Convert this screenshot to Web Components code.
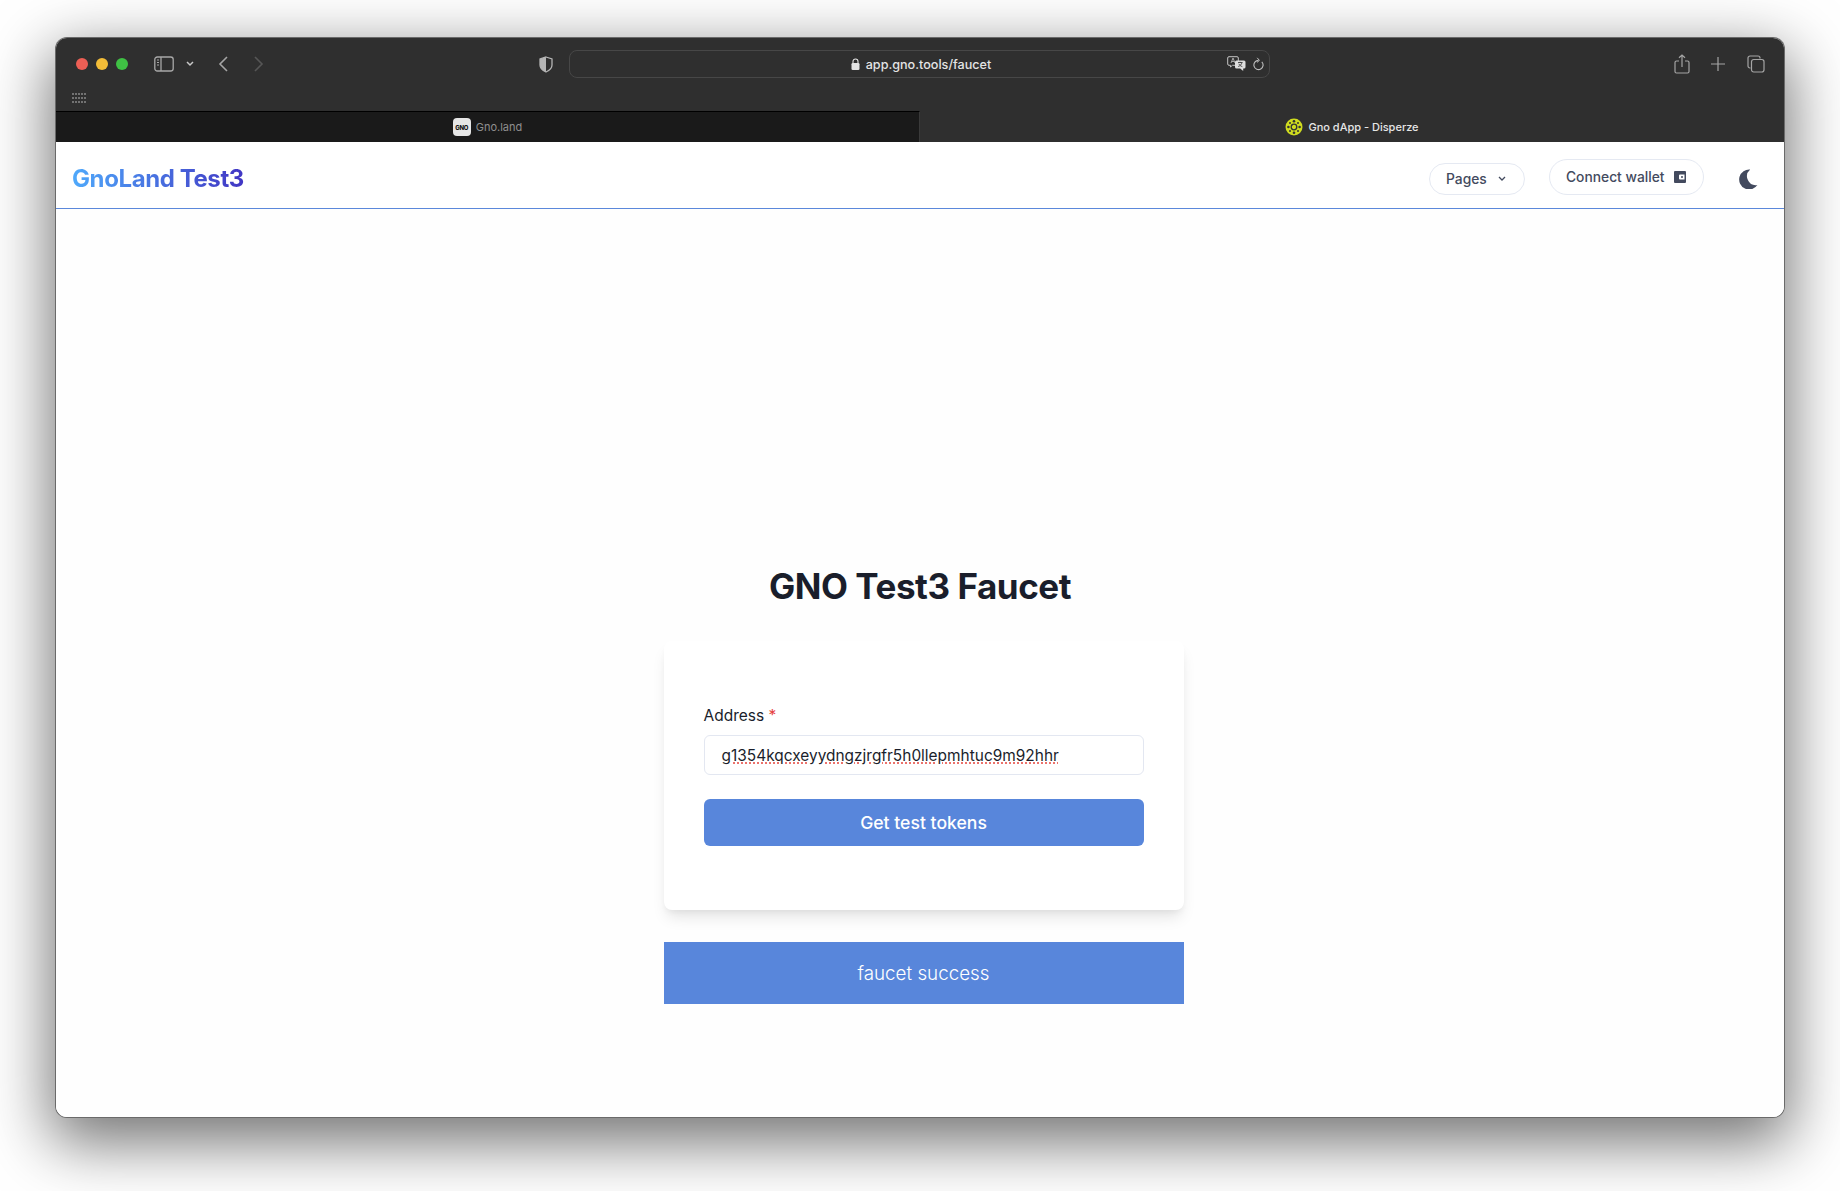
<!DOCTYPE html>
<html>
<head>
<meta charset="utf-8">
<title>GNO Test3 Faucet</title>
<style>
  html, body { margin: 0; height: 100%; background: #fff; }
  body { font-family: Inter, "Liberation Sans", sans-serif; overflow: hidden; }
</style>
</head>
<body>
<browser-window url="app.gno.tools/faucet">
  <site-nav></site-nav>
  <faucet-page>
    <faucet-form></faucet-form>
    <faucet-banner>faucet success</faucet-banner>
  </faucet-page>
</browser-window>

<script>
class BrowserWindow extends HTMLElement{
constructor(){
    super();
    this.attachShadow({mode: 'open'});
    this.shadowRoot.innerHTML=`
    <style>
        :host{
            display: flex;
            flex-direction: column;
            width: 1728px;
            height: 1079px;
            margin: 38px 0 0 56px;
            border-radius: 11px;
            background: #fefefe;
            box-shadow: 0 0 0 1px #6a6a6a, 0 20px 62px 6px rgba(0,0,0,.55);
        }
        #frame{ flex: 1; display: flex; flex-direction: column; border-radius: 11px; overflow: hidden; }
        #toolbar{ background: #2f2f2f; color: #b5b5b5; height: 73px; flex: none; }
        #row{ display: flex; align-items: center; height: 28px; padding: 12px 0 0 20px; }
        .light{ width: 12px; height: 12px; border-radius: 50%; margin-right: 8px; }
        svg{ display: block; flex: none; }
        #address{
            width: 696px;
            height: 26px;
            margin-left: 16px;
            padding-left: 3px;
            border: 1px solid #474747;
            border-radius: 8px;
            display: flex;
            align-items: center;
            justify-content: center;
            position: relative;
            font-size: 12.6px;
            font-weight: 500;
            color: #e4e4e4;
        }
        #address .lock{ margin-right: 6px; }
        #page-tools{ position: absolute; right: 5px; top: 5px; display: flex; align-items: center; gap: 7px; }
        #favs{ padding: 15px 0 0 16px; }
        #tabs{ display: grid; grid-template-columns: 1fr 1fr; height: 31px; flex: none; font-size: 11px; }
        .tab{ display: flex; align-items: center; justify-content: center; gap: 5px; border-top: 1px solid #000; box-sizing: border-box; }
        .tab.off{ background: #1a1a1a; color: #8f8f8f; border-right: 1px solid #3a3a3a; }
        .tab.on{ background: #2f2f2f; color: #e6e6e6; border-top-color: #2f2f2f; font-weight: 500; }
        #fav-gno{
            width: 18px; height: 18px; border-radius: 4px; background: #e6e6e6; color: #111;
            font-size: 6px; font-weight: 800; letter-spacing: -.2px;
            display: flex; align-items: center; justify-content: center;
        }
        #content{ flex: 1; display: flex; flex-direction: column; background: #fefefe; min-height: 0; }
    </style>
    <div id="frame">
      <div id="toolbar">
        <div id="row">
          <span class="light" style="background:#ed5f55"></span>
          <span class="light" style="background:#f3bd38"></span>
          <span class="light" style="background:#3fc144;margin-right:26px"></span>
          <svg width="20" height="16" viewBox="0 0 20 16" fill="none" stroke="#a8a8a8" stroke-width="1.3"><rect x=".8" y="1" width="18.4" height="14" rx="2.5"/><path d="M7 1v14"/><path d="M3 4h2M3 6.5h2M3 9h2" stroke-width="1.1"/></svg>
          <svg style="margin-left:12px" width="8" height="6" viewBox="0 0 8 6" fill="none" stroke="#c8c8c8" stroke-width="1.5"><path d="M1 1l3 3 3-3"/></svg>
          <svg style="margin-left:24px" width="10" height="16" viewBox="0 0 10 16" fill="none" stroke="#a5a5a5" stroke-width="1.6"><path d="M9 1L2 8l7 7"/></svg>
          <svg style="margin-left:26px" width="10" height="16" viewBox="0 0 10 16" fill="none" stroke="#565656" stroke-width="1.6"><path d="M1 1l7 7-7 7"/></svg>
          <svg style="margin-left:275px" width="14" height="17" viewBox="0 0 14 17"><path d="M7 1l6 2v6c0 3.500-3 5.700-6 7-3-1.300-6-3.500-6-7V3z" fill="none" stroke="#b5b5b5" stroke-width="1.300"/><path d="M7 1L1 3v6c0 3.500 3 5.700 6 7z" fill="#b5b5b5"/></svg>
          <div id="address">
            <svg class="lock" width="9" height="12" viewBox="0 0 9 12"><path d="M2 5.500V3.500a2.500 2.500 0 015 0v2" fill="none" stroke="#e4e4e4" stroke-width="1.100"/><rect x=".5" y="5" width="8" height="7" rx="1.300" fill="#e4e4e4"/></svg>
            <span>${this.getAttribute('url')}</span>
            <div id="page-tools">
              <svg width="19" height="15" viewBox="0 0 19 15"><path d="M2 .7h8a1.300 1.300 0 011.300 1.300v6a1.300 1.300 0 01-1.300 1.300H5.500L3.500 11V9.300H2A1.300 1.300 0 01.7 8V2A1.300 1.300 0 012 .7z" fill="#2f2f2f" stroke="#c4c4c4" stroke-width="1"/><path d="M4 7l2-5 2 5M4.800 5.500h2.400" fill="none" stroke="#c4c4c4" stroke-width=".8"/><path d="M9.500 4.500h7.500a1.500 1.500 0 011.500 1.500v5a1.500 1.500 0 01-1.500 1.500h-.8V15l-3-2.500H9.500A1.500 1.500 0 018 11V6a1.500 1.500 0 011.500-1.500z" fill="#dedede"/><path d="M11 6.500h4.500M13.200 5.800v1M15 6.500c-.5 2-2 3.500-3.800 4M11.800 7.800c.6 1.300 2 2.400 3.500 2.800" fill="none" stroke="#2f2f2f" stroke-width=".8"/></svg>
              <svg width="11" height="14" viewBox="0 0 11 14" fill="none" stroke="#bcbcbc" stroke-width="1.100"><path d="M8.800 4.800A4.600 4.600 0 1 1 5.500 3.400"/><path d="M4.200 .8l2.200 2.600-2.400 2" stroke-width="1"/></svg>
            </div>
          </div>
          <svg style="margin-left:404px" width="16" height="20" viewBox="0 0 16 20" fill="none" stroke="#a5a5a5" stroke-width="1.200"><path d="M5 7H2.500A1.500 1.500 0 001 8.500v9A1.500 1.500 0 002.500 19h11a1.500 1.500 0 001.500-1.500v-9A1.500 1.500 0 0013.500 7H11"/><path d="M8 13V1M5 3.800L8 1l3 2.800"/></svg>
          <svg style="margin-left:21px" width="14" height="14" viewBox="0 0 14 14" stroke="#a5a5a5" stroke-width="1.200"><path d="M7 0v14M0 7h14"/></svg>
          <svg style="margin-left:22px" width="18" height="18" viewBox="0 0 18 18" fill="none" stroke="#a5a5a5" stroke-width="1.200"><path d="M3.500 13H3a2 2 0 01-2-2V3a2 2 0 012-2h8a2 2 0 012 2v.5"/><rect x="4.500" y="4.500" width="12.500" height="12.500" rx="2.200"/></svg>
        </div>
        <div id="favs">
          <svg width="14" height="11" viewBox="0 0 14 11" fill="#8a8a8a"><g id="d"><rect x="0" y="0" width="2" height="2" rx="1"/><rect x="3" y="0" width="2" height="2" rx="1"/><rect x="6" y="0" width="2" height="2" rx="1"/><rect x="9" y="0" width="2" height="2" rx="1"/><rect x="12" y="0" width="2" height="2" rx="1"/></g><use href="#d" y="4"/><use href="#d" y="8"/></svg>
        </div>
      </div>
      <div id="tabs">
        <div class="tab off"><span id="fav-gno">GNO</span><span>Gno.land</span></div>
        <div class="tab on">
          <svg width="18" height="18" viewBox="0 0 18 18"><circle cx="9" cy="9" r="8.500" fill="#cfdc1f"/><circle cx="9" cy="9" r="2.800" fill="none" stroke="#333" stroke-width="1.300"/><g fill="#333"><circle cx="9" cy="3.300" r="1.300"/><circle cx="9" cy="14.700" r="1.300"/><circle cx="3.400" cy="9" r="1.300"/><circle cx="14.600" cy="9" r="1.300"/><circle cx="5" cy="5" r="1"/><circle cx="13" cy="5" r="1"/><circle cx="5" cy="13" r="1"/><circle cx="13" cy="13" r="1"/></g></svg>
          <span>Gno dApp - Disperze</span>
        </div>
      </div>
      <div id="content"><slot></slot></div>
    </div>`;
}
}

class SiteNav extends HTMLElement{
constructor(){
    super();
    this.attachShadow({mode: 'open'});
    this.shadowRoot.innerHTML=`
    <style>
        :host{
            display: flex;
            align-items: center;
            flex: none;
            height: 67px;
            box-sizing: border-box;
            padding: 7px 26px 0 16px;
            border-bottom: 1px solid #5b88db;
            background: #fff;
            color: #434a5e;
        }
        #logo{
            font-size: 24px;
            font-weight: 700;
            letter-spacing: -.4px;
            background: linear-gradient(90deg, #4fa9fb, #4136c4);
            -webkit-background-clip: text;
            background-clip: text;
            color: transparent;
            margin-right: auto;
        }
        .pill{
            display: flex;
            align-items: center;
            box-sizing: border-box;
            border: 1px solid #e5e9f2;
            border-radius: 20px;
            font-size: 13.8px;
            font-weight: 500;
            background: #fff;
        }
        #pages{ height: 32px; width: 96px; padding-left: 16px; }
        #pages svg{ margin-left: 11px; }
        #wallet{ height: 36px; width: 155px; padding-left: 16px; margin: 0 0 4px 24px; }
        #wallet svg{ margin-left: 9px; }
        #moon{ margin-left: 34px; }
    </style>
    <div id="logo">GnoLand Test3</div>
    <div class="pill" id="pages">Pages
      <svg width="8" height="6" viewBox="0 0 8 6" fill="none" stroke="#434a5e" stroke-width="1.300"><path d="M1 1l3 3 3-3"/></svg>
    </div>
    <div class="pill" id="wallet">Connect wallet
      <svg width="12" height="12" viewBox="0 0 12 12"><path fill-rule="evenodd" d="M1 0h10a1 1 0 011 1v10a1 1 0 01-1 1H1a1 1 0 01-1-1V1a1 1 0 011-1zm5 3.500a1 1 0 00-1 1v3a1 1 0 001 1h4.500v-5zM8 5a1 1 0 110 2 1 1 0 010-2z" fill="#434a5e"/></svg>
    </div>
    <svg id="moon" width="20" height="20" viewBox="0 0 18 18"><path d="M11 .5A9 9 0 1017.500 14.500 8 8 0 0111 .5z" fill="#434a5e"/></svg>`;
}
}

class FaucetPage extends HTMLElement{
constructor(){
    super();
    this.attachShadow({mode: 'open'});
    this.shadowRoot.innerHTML=`
    <style>
        :host{
            display: flex;
            flex-direction: column;
            align-items: center;
            flex: 1;
            padding-top: 357px;
            color: #1a1e2b;
        }
        h1{
            margin: 0 0 35px;
            font-size: 35px;
            line-height: 40px;
            font-weight: 700;
            letter-spacing: -.45px;
        }
        #stack{ width: 520px; margin-left: 7px; display: flex; flex-direction: column; gap: 32px; }
    </style>
    <h1>GNO Test3 Faucet</h1>
    <div id="stack"><slot></slot></div>`;
}
}

class FaucetForm extends HTMLElement{
constructor(){
    super();
    this.attachShadow({mode: 'open'});
    this.shadowRoot.innerHTML=`
    <style>
        :host{
            display: block;
            box-sizing: border-box;
            height: 269px;
            padding: 63px 40px 0;
            background: #fff;
            border-radius: 8px;
            box-shadow: 0 10px 15px -3px rgba(0,0,0,.1), 0 4px 6px -2px rgba(0,0,0,.05);
        }
        label{ display: block; font-size: 15.5px; line-height: 24px; font-weight: 400; color: #1a1e2b; margin: 0 0 7px 0; }
        label span{ color: #e53e3e; }
        #input{
            box-sizing: border-box;
            height: 40px;
            padding: 0 17px;
            border: 1px solid #e3e7f1;
            border-radius: 6px;
            display: flex;
            align-items: center;
            font-size: 15.45px;
            color: #1a1e2b;
        }
        #input span{ text-decoration: underline dotted #e5443c; text-underline-offset: 2px; }
        #submit{
            box-sizing: border-box;
            height: 47px;
            margin-top: 24px;
            border-radius: 6px;
            background: #5886db;
            color: #fff;
            font-size: 17.6px;
            font-weight: 500;
            display: flex;
            align-items: center;
            justify-content: center;
        }
    </style>
    <label>Address <span>*</span></label>
    <div id="input"><span>g1354kqcxeyydngzjrgfr5h0llepmhtuc9m92hhr</span></div>
    <div id="submit">Get test tokens</div>`;
}
}

class FaucetBanner extends HTMLElement{
constructor(){
    super();
    this.attachShadow({mode: 'open'});
    this.shadowRoot.innerHTML=`
    <style>
        :host{
            display: flex;
            align-items: center;
            justify-content: center;
            height: 62px;
            background: #5886db;
            color: #fff;
            font-size: 18.8px;
            font-weight: 300;
        }
    </style>
    <slot></slot>`;
}
}

customElements.define('browser-window', BrowserWindow);
customElements.define('site-nav', SiteNav);
customElements.define('faucet-page', FaucetPage);
customElements.define('faucet-form', FaucetForm);
customElements.define('faucet-banner', FaucetBanner);
</script>
</body>
</html>
